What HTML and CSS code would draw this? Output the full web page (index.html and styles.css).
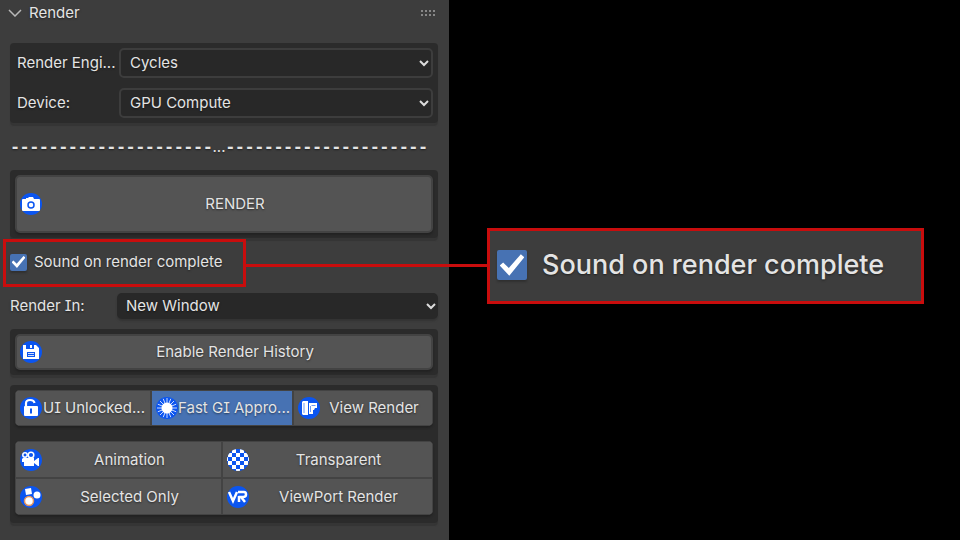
FILE: index.html
```html
<!DOCTYPE html>
<html lang="en">
<head>
    <meta charset="UTF-8">
    <meta name="viewport" content="width=device-width, initial-scale=1.0">
    <title>Render</title>
    <link rel="stylesheet" href="styles.css">
</head>
<body>
    <main class="panel">
        <header class="panel-header">
            <svg class="fold" width="14" height="8" viewBox="0 0 14 8"><path d="M1 1l6 6 6-6"/></svg>
            <h1>Render</h1>
            <svg class="grip" width="15" height="6" viewBox="0 0 15 6"><path d="M0 1h15M0 5h15"/></svg>
        </header>

        <section class="group settings">
            <div class="row">
                <label for="engine">Render Engi...</label>
                <div class="dropdown">
                    <select id="engine"><option>Cycles</option></select>
                    <svg width="12" height="8" viewBox="0 0 12 8"><path d="M2 2l4 4 4-4"/></svg>
                </div>
            </div>
            <div class="row">
                <label for="device">Device:</label>
                <div class="dropdown">
                    <select id="device"><option>GPU Compute</option></select>
                    <svg width="12" height="8" viewBox="0 0 12 8"><path d="M2 2l4 4 4-4"/></svg>
                </div>
            </div>
        </section>

        <div class="divider"><span class="dashes">---------------------</span><span>...</span><span class="dashes">---------------------</span></div>

        <section class="group">
            <button class="btn btn-render">
                <svg class="icon" viewBox="0 0 22 22"><circle cx="11" cy="11" r="11" fill="#0b55f0"/><path d="M2 7q0-1 1-1h3V5h2l1-1h4l1 2h5q1 0 1 1v10q0 1-1 1H3q-1 0-1-1z" fill="#fff"/><circle cx="11" cy="12" r="3" fill="none" stroke="#0b55f0" stroke-width="1.500"/></svg>
                <span>RENDER</span>
            </button>
        </section>

        <div class="sound-row">
            <label class="sound highlight"><input type="checkbox" checked>Sound on render complete</label>
            <span class="connector"></span>
        </div>

        <div class="row render-in">
            <label for="target">Render In:</label>
            <div class="dropdown">
                <select id="target"><option>New Window</option></select>
                <svg width="12" height="8" viewBox="0 0 12 8"><path d="M2 2l4 4 4-4"/></svg>
            </div>
        </div>

        <section class="group history">
            <button class="btn">
                <svg class="icon" viewBox="0 0 22 22"><circle cx="11" cy="11" r="11" fill="#0b55f0"/><path d="M3 4h3v4h8V4h2l3 3v11H3z" fill="#fff"/><path d="M10 4h2v3h-2z" fill="#fff"/><path d="M7 11h8v5H7z" fill="#0b55f0"/><path d="M8 12.500h6M8 14.500h6" stroke="#fff" stroke-width=".8"/></svg>
                <span>Enable Render History</span>
            </button>
        </section>

        <section class="group options">
            <div class="btn-row three">
                <button class="btn">
                    <svg class="icon" viewBox="0 0 22 22"><circle cx="11" cy="11" r="11" fill="#0b55f0"/><path d="M6 10V6.500Q6 3 10 3t4.500 3" fill="none" stroke="#fff" stroke-width="2.200"/><rect x="4" y="9" width="14" height="10" rx="1" fill="#fff"/><path d="M10 11.500h2v5h-2z" fill="#0b55f0"/></svg>
                    <span>UI Unlocked...</span>
                </button>
                <button class="btn active">
                    <svg class="icon" viewBox="0 0 22 22"><circle cx="11" cy="11" r="11" fill="#0b55f0"/><circle cx="11" cy="11" r="5.500" fill="#fff"/><g stroke="#fff" stroke-width=".8"><path d="M11 1v20M1 11h20M4 4l14 14M4 18L18 4M7.200 1.800l7.600 18.400M14.800 1.800L7.200 20.200M1.800 7.200l18.400 7.600M1.800 14.800l18.400-7.600"/></g></svg>
                    <span>Fast GI Appro...</span>
                </button>
                <button class="btn">
                    <svg class="icon" viewBox="0 0 22 22"><circle cx="11" cy="11" r="11" fill="#0b55f0"/><path d="M4 5l1-1h5v14H5l-1-1zM11 6h8v5h-2l-1 2h-1v4h-4z" fill="#fff"/><path d="M6 6v10M12.500 9v6M13.500 8.500h4" stroke="#0b55f0" stroke-width=".6"/></svg>
                    <span>View Render</span>
                </button>
            </div>
            <div class="btn-row two">
                <button class="btn">
                    <svg class="icon" viewBox="0 0 22 22"><circle cx="11" cy="11" r="11" fill="#0b55f0"/><g fill="none" stroke="#fff" stroke-width="1.500"><circle cx="5" cy="6" r="2.200"/><circle cx="11" cy="6" r="2.800"/></g><path d="M3 9h11v3l4-3h1v8h-1l-4-3v3H4v-4H2v-3z" fill="#fff"/></svg>
                    <span>Animation</span>
                </button>
                <button class="btn">
                    <svg class="icon" viewBox="0 0 22 22"><defs><clipPath id="disc"><circle cx="11" cy="11" r="11"/></clipPath></defs><g clip-path="url(#disc)"><path d="M0 0h22v22H0z" fill="#0b55f0"/><path d="M5 2h4M13 2h4M1 6h4M9 6h4M17 6h4M5 10h4M13 10h4M1 14h4M9 14h4M17 14h4M5 18h4M13 18h4M9 22h4M-3 10h4M21 10h4" stroke="#fff" stroke-width="4"/></g></svg>
                    <span>Transparent</span>
                </button>
                <button class="btn">
                    <svg class="icon" viewBox="0 0 22 22"><circle cx="11" cy="11" r="11" fill="#0b55f0"/><path d="M5 3l6-1 1 6-6 1z" fill="#fff"/><circle cx="17" cy="9" r="3.500" fill="#fff"/><circle cx="9" cy="15" r="4.500" fill="#fff" stroke="#e5955c" stroke-width="1.500"/></svg>
                    <span>Selected Only</span>
                </button>
                <button class="btn">
                    <svg class="icon" viewBox="0 0 22 22"><circle cx="11" cy="11" r="11" fill="#0b55f0"/><path d="M2 6l4 9 4-9M12 16V10M11 6h6q2 0 2 2.500T16 11h-2l4 5" fill="none" stroke="#fff" stroke-width="2.500"/></svg>
                    <span>ViewPort Render</span>
                </button>
            </div>
        </section>
    </main>

    <aside class="stage">
        <label class="sound callout"><input type="checkbox" checked>Sound on render complete</label>
    </aside>
</body>
</html>
```

FILE: styles.css
```css
* {
    box-sizing: border-box;
}
body {
    margin: 0;
    min-height: 100vh;
    display: grid;
    grid-template-columns: 449fr 511fr;
    background: #000;
    color: #e4e4e4;
    font: 15px/20px Inter, sans-serif;
    font-feature-settings: "cv08";
    text-shadow: 0 1px 2px rgba(0, 0, 0, 0.5);
}
button, select {
    font: inherit;
    font-feature-settings: inherit;
    color: inherit;
    text-shadow: inherit;
    margin: 0;
}
.panel {
    background: #3d3d3d;
    padding: 0 11px 16px 10px;
    min-width: 0;
}
.panel-header {
    display: flex;
    align-items: center;
    height: 25px;
    margin: 0 0 18px -2px;
}
.panel-header h1 {
    flex: 1;
    margin: 0 0 0 7px;
    font-size: 15px;
    font-weight: 400;
}
.fold {
    fill: none;
    stroke: #b8b8b8;
    stroke-width: 1.5;
}
.grip {
    margin-right: 2px;
    stroke: #888;
    stroke-width: 2;
    stroke-dasharray: 2 2;
}
.group {
    background: #2b2b2b;
    border-radius: 4px;
    padding: 5px;
    box-shadow: 0 3px 1px #353535;
}
.settings {
    display: grid;
    gap: 10px;
}
.row {
    display: grid;
    grid-template-columns: 102px 1fr;
    align-items: center;
    padding-left: 2px;
    white-space: nowrap;
}
.dropdown {
    display: grid;
    align-items: center;
}
.dropdown select,
.dropdown svg {
    grid-area: 1 / 1;
}
.dropdown select {
    appearance: none;
    width: 100%;
    height: 30px;
    padding: 0 9px;
    border: 2px solid #3d3d3d;
    border-radius: 5px;
    background: #282828;
}
.dropdown svg {
    justify-self: end;
    margin-right: 3px;
    fill: none;
    stroke: #ddd;
    stroke-width: 2;
    pointer-events: none;
}
.divider {
    display: flex;
    justify-content: center;
    align-items: center;
    height: 47px;
    padding-right: 10px;
    overflow: hidden;
}
.dashes {
    font-family: "DejaVu Sans Mono", monospace;
    font-size: 16px;
    font-weight: 700;
}
.btn {
    display: grid;
    grid-template-columns: 22px 1fr;
    align-items: center;
    width: 100%;
    height: 36px;
    padding: 0 3px;
    border: 2px solid #434343;
    border-radius: 5px;
    background: #545454;
    box-shadow: 0 2px 2px #222;
    white-space: nowrap;
    cursor: pointer;
}
.btn:hover {
    background: #5e5e5e;
}
.btn-render {
    height: 58px;
}
.icon {
    width: 22px;
    height: 22px;
}
.sound-row {
    display: flex;
    align-items: center;
    margin: 1px -49px 6px -7px;
}
.sound {
    display: flex;
    align-items: center;
    border: 3px solid #c90d0d;
    white-space: nowrap;
}
.sound input {
    appearance: none;
    display: grid;
    place-items: center;
    width: 17px;
    height: 17px;
    margin: 0 7px 0 0;
    background: #4772b3;
    border-radius: 2px;
    box-shadow: 0 2px 2px #303030;
}
.sound input:checked::before {
    content: "";
    width: 82%;
    height: 72%;
    background: #fff;
    clip-path: polygon(0 52%, 14% 38%, 37% 64%, 86% 0, 100% 14%, 39% 100%);
}
.highlight {
    width: 243px;
    height: 48px;
    padding: 0 0 2px 4px;
}
.connector {
    flex: 1;
    height: 3px;
    margin-top: 4px;
    background: #c90d0d;
    z-index: 1;
}
.render-in {
    grid-template-columns: 107px 1fr;
    padding-left: 0;
}
.render-in select {
    height: 26px;
    border: 0;
    box-shadow: 0 2px 2px #333;
}
.render-in svg {
    margin-right: 1px;
}
.history {
    margin: 10px 0;
}
.options {
    display: grid;
    gap: 15px;
    padding-bottom: 8px;
}
.btn-row {
    display: grid;
    border-radius: 5px;
    overflow: hidden;
    box-shadow: 0 2px 2px #222;
}
.btn-row .btn {
    padding: 0 4px;
    border-width: 1px;
    border-radius: 0;
    box-shadow: none;
}
.three {
    grid-template-columns: minmax(0, 136fr) minmax(0, 142fr) minmax(0, 140fr);
}
.two {
    grid-template-columns: 207fr 211fr;
}
.two .btn {
    height: 37px;
}
.btn-row .active {
    background: #4772b3;
}
.stage {
    padding: 228px 36px 0 38px;
}
.callout {
    height: 76px;
    padding: 0 0 2px 7px;
    background: #3d3d3d;
    font-size: 27px;
    line-height: 36px;
    font-weight: 500;
}
.callout input {
    width: 30px;
    height: 30px;
    margin-right: 15px;
}
```
